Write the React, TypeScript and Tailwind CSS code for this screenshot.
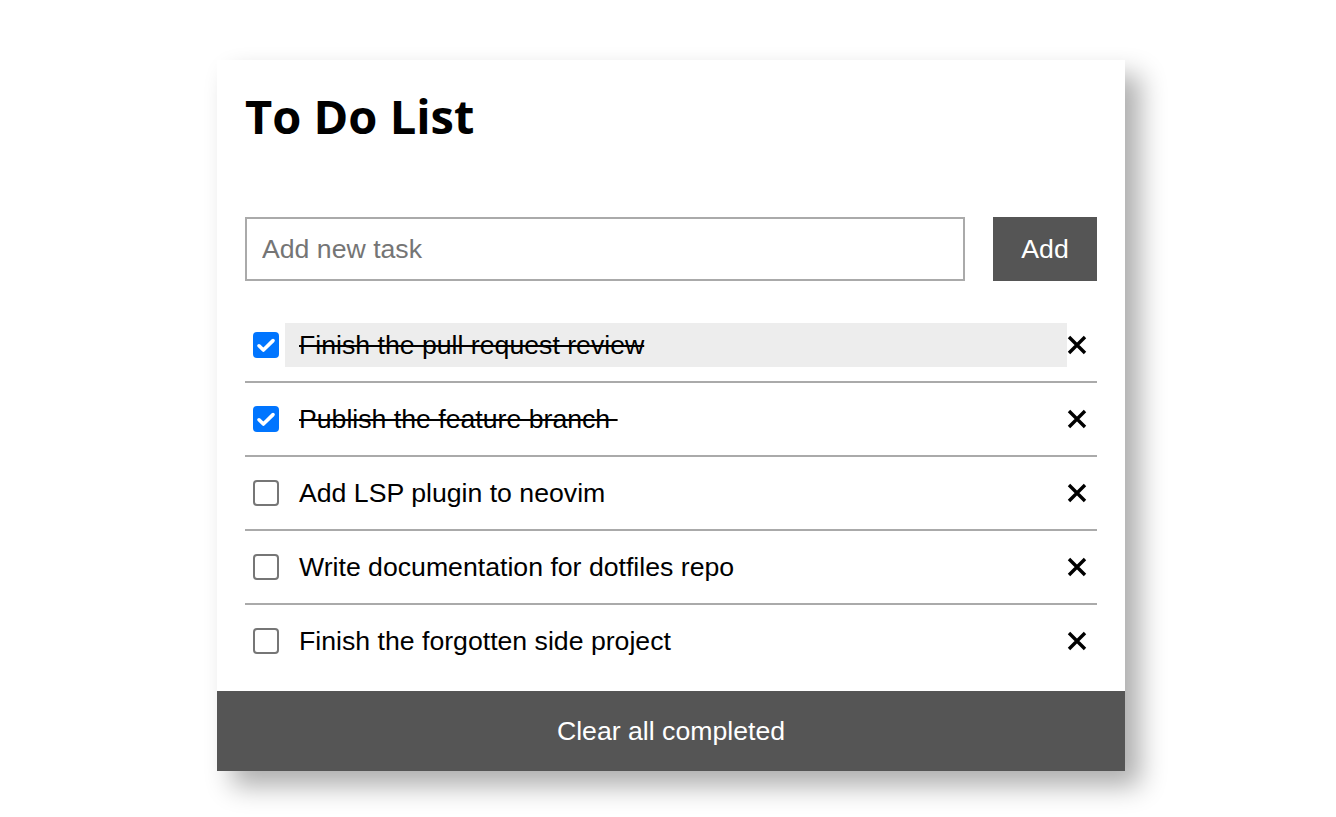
import React, { useState } from "react";

type Task = { id: number; text: string; done: boolean };

const initial: Task[] = [
  { id: 1, text: "Finish the pull request review", done: true },
  { id: 2, text: "Publish the feature branch\u00a0", done: true },
  { id: 3, text: "Add LSP plugin to neovim", done: false },
  { id: 4, text: "Write documentation for dotfiles repo", done: false },
  { id: 5, text: "Finish the forgotten side project", done: false },
];

function XIcon() {
  return (
    <svg width="20" height="20" viewBox="0 0 20 20" fill="none">
      <path d="M2 2 L18 18 M18 2 L2 18" stroke="#000" strokeWidth="3.4" strokeLinecap="butt" />
    </svg>
  );
}

function Check({ checked, onClick }: { checked: boolean; onClick: () => void }) {
  return (
    <div
      role="checkbox"
      aria-checked={checked}
      onClick={onClick}
      className={`ml-[8px] mr-[6px] flex h-[26px] w-[26px] shrink-0 items-center justify-center rounded-[4px] ${
        checked ? "bg-[#0075ff]" : "border-2 border-[#767676] bg-white"
      }`}
    >
      {checked && (
        <svg width="26" height="26" viewBox="0 0 26 26" fill="none">
          <path d="M6 13.8 L10.4 18 L20 8.6" stroke="#fff" strokeWidth="3.6" strokeLinecap="round" strokeLinejoin="round" />
        </svg>
      )}
    </div>
  );
}

export default function App() {
  const [tasks, setTasks] = useState<Task[]>(initial);
  return (
    <div className="min-h-[817px] bg-white pt-[60px] font-['Liberation_Sans',Arial,sans-serif]">
      <div className="ml-[217px] w-[908px] bg-white shadow-[15px_15px_25px_rgba(0,0,0,0.32)]">
        <div className="px-[28px] pt-[24px] pb-[14px]">
          <h1 className="font-['Open_Sans',sans-serif] text-[47px] font-bold leading-[65px] text-black">
            To Do List
          </h1>
          <div className="mt-[68px] flex gap-[28px]">
            <input
              className="h-[64px] flex-1 border-2 border-[#aaaaaa] px-[15px] text-[26.67px] text-black outline-none placeholder:text-[#757575]"
              placeholder="Add new task"
            />
            <button className="h-[64px] w-[104px] bg-[#555555] text-[26.67px] text-white">Add</button>
          </div>
          <ul className="mt-[28px]">
            {tasks.map((t, i) => (
              <li
                key={t.id}
                className={`flex items-center py-[14px] ${i < tasks.length - 1 ? "border-b-2 border-[#aaaaaa]" : ""}`}
              >
                <Check
                  checked={t.done}
                  onClick={() =>
                    setTasks(tasks.map((x) => (x.id === t.id ? { ...x, done: !x.done } : x)))
                  }
                />
                <span
                  className={`flex h-[44px] flex-1 items-center whitespace-pre pl-[14px] text-[26.67px] text-black ${
                    i === 0 ? "bg-[#ededed]" : ""
                  }`}
                >
                  <span className={t.done ? "line-through" : ""}>{t.text}</span>
                </span>
                <button className="mr-[10px] flex h-[44px] w-[20px] items-center justify-center">
                  <XIcon />
                </button>
              </li>
            ))}
          </ul>
        </div>
        <button className="flex h-[80px] w-full items-center justify-center bg-[#555555] text-[26.67px] text-white">
          Clear all completed
        </button>
      </div>
    </div>
  );
}
